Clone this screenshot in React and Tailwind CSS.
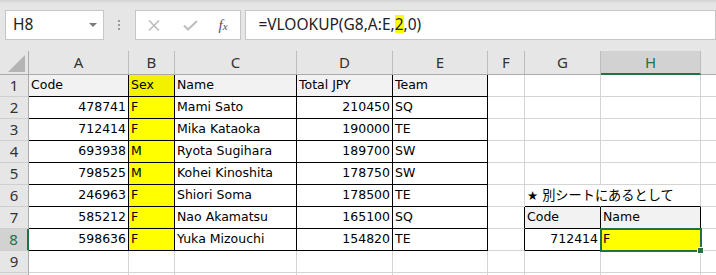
import React from "react";
import clsx from "clsx";

const COLS = [
  { key: "A", w: "w-[100px]" },
  { key: "B", w: "w-[46px]" },
  { key: "C", w: "w-[122px]" },
  { key: "D", w: "w-[96px]" },
  { key: "E", w: "w-[95px]" },
  { key: "F", w: "w-[37px]" },
  { key: "G", w: "w-[76px]" },
  { key: "H", w: "w-[100px]" },
  { key: "I", w: "w-[100px]", hidden: true },
];

const table = [
  ["Code", "Sex", "Name", "Total JPY", "Team"],
  ["478741", "F", "Mami Sato", "210450", "SQ"],
  ["712414", "F", "Mika Kataoka", "190000", "TE"],
  ["693938", "M", "Ryota Sugihara", "189700", "SW"],
  ["798525", "M", "Kohei Kinoshita", "178750", "SW"],
  ["246963", "F", "Shiori Soma", "178500", "TE"],
  ["585212", "F", "Nao Akamatsu", "165100", "SQ"],
  ["598636", "F", "Yuka Mizouchi", "154820", "TE"],
];

// what goes in a cell, and how it looks
function cellInfo(row, c) {
  const info = { v: "", right: false, fill: "", rb: "border-r-[#d4d4d4]", bb: "border-b-[#d4d4d4]" };
  const idx = "ABCDE".indexOf(c);
  if (row >= 1 && row <= 8 && idx >= 0) {
    info.v = table[row - 1][idx];
    info.rb = "border-r-black";
    info.bb = "border-b-black";
    info.right = row > 1 && (c === "A" || c === "D");
    if (c === "B") info.fill = row === 1 ? "bg-[#f2f200]" : "bg-[#ffff00]";
    else if (row === 1) info.fill = "bg-[#f2f2f2]";
  }
  if (c === "F" && (row === 7 || row === 8)) info.rb = "border-r-black";
  if (row === 6 && c === "G") {
    info.v = (
      <>
        ★ <span className="text-[13.2px]">別シートにあるとして</span>
      </>
    );
    info.rb = "border-r-transparent";
    info.bb = "border-b-black";
  }
  if (row === 6 && c === "H") info.bb = "border-b-black";
  if (row === 7 && (c === "G" || c === "H")) {
    info.v = c === "G" ? "Code" : "Name";
    info.fill = "bg-[#f2f2f2]";
    info.rb = "border-r-black";
    info.bb = "border-b-black";
  }
  if (row === 8 && c === "G") {
    info.v = "712414";
    info.right = true;
    info.rb = "border-r-black";
    info.bb = "border-b-black";
  }
  if (row === 8 && c === "H") {
    info.v = "F";
    info.fill = "bg-[#ffff00]";
    info.rb = "border-r-black";
    info.bb = "border-b-black";
    info.selected = true;
  }
  return info;
}

function Cell({ col, info }) {
  return (
    <div
      className={clsx(
        "relative flex h-full shrink-0 items-center border-r border-b px-[2px]",
        col.w,
        info.right ? "justify-end" : "justify-start",
        info.fill,
        info.rb,
        info.bb
      )}
    >
      <span className="relative z-10 whitespace-nowrap">{info.v}</span>
      {info.selected && (
        <div className="absolute -left-[1px] -top-[1px] z-20 h-[24px] w-[102px] border-2 border-[#217346]">
          <div className="absolute -right-[4px] -bottom-[4px] h-[7px] w-[7px] border border-white bg-[#217346]" />
        </div>
      )}
    </div>
  );
}

function Toolbar() {
  return (
    <div className="relative h-[51px] bg-[#e6e6e6]">
      <div className="h-[4px] bg-linear-to-b from-[#d3d3d3] to-[#e6e6e6]" />
      <div className="flex items-center pt-[6px] pl-[5px]">
        <div className="flex h-[30px] w-[101px] items-center border border-[#c6c6c6] bg-white pl-[7px] text-[15.5px] text-[#222]">
          <span>H8</span>
          <div className="mr-[6px] ml-auto h-0 w-0 border-x-[4px] border-t-[4px] border-x-transparent border-t-[#7a7a7a]" />
        </div>
        <div className="flex w-[31px] flex-col items-center gap-[2px]">
          <div className="h-[2px] w-[2px] bg-[#9a9a9a]" />
          <div className="h-[2px] w-[2px] bg-[#9a9a9a]" />
          <div className="h-[2px] w-[2px] bg-[#9a9a9a]" />
        </div>
        <div className="flex h-[30px] w-[109px] items-center border border-[#c6c6c6] bg-white">
          <svg className="ml-[12px]" width="12" height="11" viewBox="0 0 12 11">
            <path d="M1 0.5 L11 10.5 M11 0.5 L1 10.5" stroke="#bdbdbd" strokeWidth="1.6" fill="none" />
          </svg>
          <svg className="ml-[23px]" width="15" height="11" viewBox="0 0 15 11">
            <path d="M1 5.5 L5 9.5 L14 1" stroke="#bdbdbd" strokeWidth="2" fill="none" />
          </svg>
          <span
            className="ml-[21px] text-[15px] italic leading-none text-[#555]"
            style={{ fontFamily: '"Liberation Serif", serif' }}
          >
            f<span className="text-[11px]">x</span>
          </span>
        </div>
        <div className="ml-[4px] flex h-[30px] w-[480px] items-center border border-[#c6c6c6] bg-white pl-[12px] text-[15.5px] text-[#222]">
          <span className="whitespace-nowrap">
            =VLOOKUP(G8,A:E,<span className="inline-block bg-[#ffff00] leading-[18px]">2</span>,0)
          </span>
        </div>
      </div>
    </div>
  );
}

function ColumnHeader() {
  return (
    <div className="flex h-[24px] bg-[#e6e6e6] text-[15px] text-[#333]">
      <div className="relative h-full w-[29px] shrink-0 border-r border-b border-r-[#ababab] border-b-[#ababab]">
        <div className="absolute top-[4px] left-[8px] h-0 w-0 border-b-[17px] border-l-[17px] border-b-[#b4b4b4] border-l-transparent" />
      </div>
      {COLS.map((col) => (
        <div
          key={col.key}
          className={clsx(
            "flex h-full shrink-0 items-center justify-center border-r border-r-[#bdbdbd]",
            col.w,
            col.key === "H"
              ? "border-b-2 border-b-[#217346] bg-[#d2d2d2] text-[#217346]"
              : "border-b border-b-[#ababab]"
          )}
        >
          {col.hidden ? "" : col.key}
        </div>
      ))}
    </div>
  );
}

export default function App() {
  const rows = [1, 2, 3, 4, 5, 6, 7, 8, 9, 10];

  return (
    <div
      className="h-[275px] w-[716px] overflow-hidden bg-white"
      style={{ fontFamily: '"Noto Sans", "Noto Sans CJK JP", sans-serif' }}
    >
      <Toolbar />
      <ColumnHeader />
      {rows.map((r) => (
        <div key={r} className="flex h-[22px]">
          <div
            className={clsx(
              "flex h-full w-[29px] shrink-0 items-center justify-center border-b border-b-[#cfcfcf] text-[15px]",
              r === 8
                ? "border-r-2 border-r-[#217346] bg-[#d2d2d2] text-[#217346]"
                : "border-r border-r-[#ababab] bg-[#e6e6e6] text-[#333]"
            )}
          >
            {r < 10 ? r : ""}
          </div>
          <div
            className="flex h-full text-[12.5px] text-black"
            style={{ fontFamily: '"DejaVu Sans", "Noto Sans CJK JP", sans-serif' }}
          >
            {COLS.map((col) => (
              <Cell key={col.key} col={col} info={cellInfo(r, col.key)} />
            ))}
          </div>
        </div>
      ))}
    </div>
  );
}
